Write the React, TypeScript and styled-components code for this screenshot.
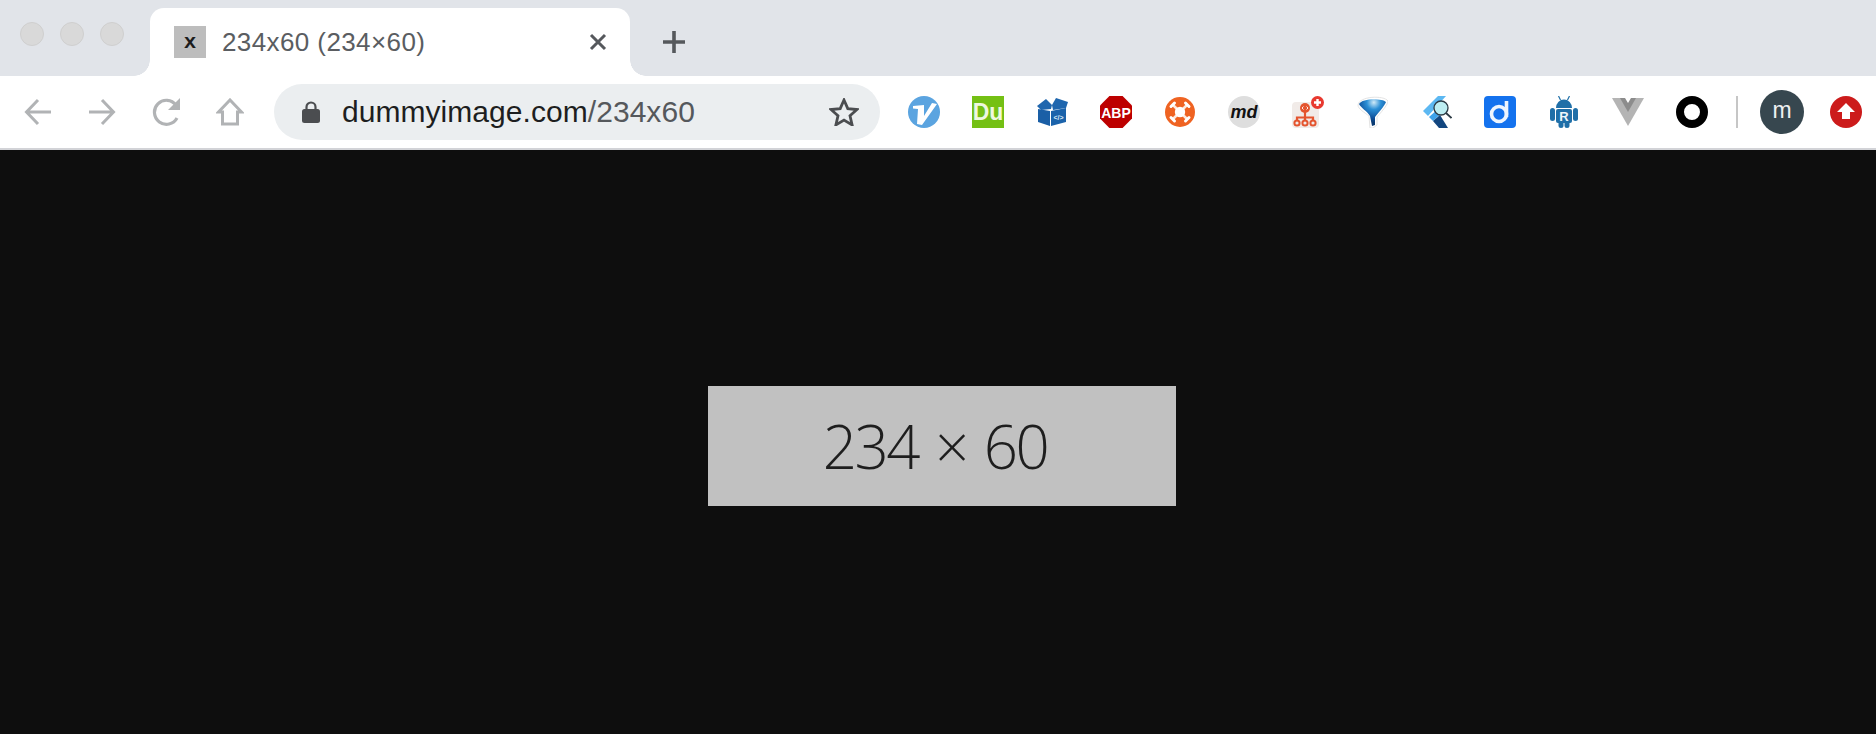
import React from 'react';
import styled, { createGlobalStyle } from 'styled-components';

const GlobalStyle = createGlobalStyle`
    html, body {
        margin: 0;
        padding: 0;
        background: #0e0e0e;
    }
    body {
        font-family: "Liberation Sans", Arial, sans-serif;
    }
`;

const Page = styled.div`
    width: 1876px;
    height: 734px;
    display: flex;
    flex-direction: column;
    overflow: hidden;
`;

const TabStrip = styled.div`
    height: 76px;
    flex: none;
    box-sizing: border-box;
    padding-top: 8px;
    background: #e1e4e9;
    display: flex;
`;

const WindowDots = styled.div`
    width: 150px;
    flex: none;
    box-sizing: border-box;
    padding: 14px 0 0 20px;
    display: flex;
    gap: 16px;
`;

const Dot = styled.span`
    width: 24px;
    height: 24px;
    box-sizing: border-box;
    border-radius: 50%;
    background: #d9d9d9;
    border: 1px solid #cfcfcf;
`;

const Tab = styled.div`
    width: 480px;
    height: 68px;
    flex: none;
    box-sizing: border-box;
    padding: 0 22px 0 24px;
    position: relative;
    background: #fff;
    border-radius: 14px 14px 0 0;
    display: flex;
    align-items: center;

    &::before, &::after {
        content: "";
        position: absolute;
        bottom: 0;
        width: 16px;
        height: 16px;
    }
    &::before {
        left: -16px;
        background: radial-gradient(circle at 0 0, #e1e4e9 15.5px, #fff 16px);
    }
    &::after {
        right: -16px;
        background: radial-gradient(circle at 100% 0, #e1e4e9 15.5px, #fff 16px);
    }
`;

const Favicon = styled.div`
    width: 32px;
    height: 32px;
    flex: none;
    background: #bdbdbd;
    color: #1c1c1c;
    font-family: "Liberation Mono", monospace;
    font-weight: 700;
    font-size: 21px;
    line-height: 33px;
    text-align: center;
`;

const TabTitle = styled.span`
    flex: 1;
    margin-left: 16px;
    font-size: 26px;
    letter-spacing: 0.4px;
    color: #5a5d61;
`;

const TabClose = styled.svg`
    width: 20px;
    height: 20px;
    flex: none;
`;

const NewTab = styled.svg`
    width: 28px;
    height: 28px;
    flex: none;
    margin: 20px 0 0 30px;
`;

const Toolbar = styled.div`
    height: 74px;
    flex: none;
    box-sizing: border-box;
    padding-left: 6px;
    background: #fff;
    border-bottom: 2px solid #d2d3d7;
    display: flex;
    align-items: center;
`;

const NavButton = styled.div`
    width: 64px;
    height: 32px;
    flex: none;
    display: flex;
    align-items: center;
    justify-content: center;
`;

const AddressBar = styled.div`
    width: 606px;
    height: 56px;
    flex: none;
    box-sizing: border-box;
    margin: 0 28px 0 12px;
    padding: 0 21px 0 28px;
    border-radius: 28px;
    background: #ebeef0;
    display: flex;
    align-items: center;
`;

const Url = styled.div`
    flex: 1;
    margin-left: 22px;
    font-size: 30px;
    letter-spacing: 0.05px;
    color: #1d1e20;

    span {
        color: #55585c;
    }
`;

const Extensions = styled.div`
    display: flex;
    gap: 32px;
    align-items: center;
`;

const ExtIcon = styled.svg`
    width: 32px;
    height: 32px;
    flex: none;
    display: block;
`;

const Divider = styled.div`
    width: 2px;
    height: 32px;
    flex: none;
    margin: 0 22px 0 28px;
    background: #c6c6c6;
`;

const Avatar = styled.div`
    width: 44px;
    height: 44px;
    flex: none;
    margin-right: 26px;
    border-radius: 50%;
    background: #37474f;
    color: #eef0f1;
    font-size: 23px;
    line-height: 40px;
    text-align: center;
`;

const Viewport = styled.main`
    flex: 1;
    box-sizing: border-box;
    padding: 8px 0 0 8px;
    background: #0e0e0e;
    display: flex;
    align-items: center;
    justify-content: center;
`;

const DummyImage = styled.div`
    width: 468px;
    height: 120px;
    box-sizing: border-box;
    padding-right: 14px;
    background: #c1c1c1;
    display: flex;
    align-items: center;
    justify-content: center;
`;

const DummyLabel = styled.span`
    color: #1e1e1e;
    font-family: "Open Sans", sans-serif;
    font-weight: 300;
    font-size: 60px;
    letter-spacing: -2.5px;
    word-spacing: 4px;
    white-space: pre;
    filter: blur(0.5px);
`;

const grey = '#b1b3b5';

function Vimium() {
    return (
        <ExtIcon viewBox="0 0 32 32">
            <circle cx="16" cy="16" r="16" fill="#5ba4e0" />
            <path d="M5 10l11-1v11l8-13 5 1-15 21-5-1 1-15-5-.5z" fill="#fff" />
        </ExtIcon>
    );
}

function Duplicate() {
    return (
        <ExtIcon viewBox="0 0 32 32">
            <rect width="32" height="32" fill="#74c014" />
            <text x="16" y="24" textAnchor="middle" fontFamily="Liberation Sans" fontWeight="700" fontSize="23" fill="#eef8e0">Du</text>
        </ExtIcon>
    );
}

function CodeBox() {
    return (
        <ExtIcon viewBox="0 0 32 32">
            <path d="M1 10l9-7 6 6-1 4-10 1z" fill="#1f66ae" />
            <path d="M16 9l4-7 12 4-2 6-13 2z" fill="#1f66ae" />
            <path d="M2 13l12 2v15L2 26z" fill="#1a5fa6" />
            <path d="M15 15l15-3v14l-15 4z" fill="#1b63ab" />
            <text x="22.5" y="24" textAnchor="middle" fontFamily="Liberation Sans" fontWeight="700" fontSize="7" fill="#dcebf7">&lt;/&gt;</text>
        </ExtIcon>
    );
}

function Abp() {
    return (
        <ExtIcon viewBox="0 0 32 32">
            <path d="M9.4 0h13.2L32 9.4v13.2L22.6 32H9.4L0 22.6V9.4z" fill="#bd0000" />
            <text x="16" y="21.5" textAnchor="middle" fontFamily="Liberation Sans" fontWeight="700" fontSize="14" fill="#fff">ABP</text>
        </ExtIcon>
    );
}

function Hub() {
    return (
        <ExtIcon viewBox="0 0 32 32">
            <circle cx="16" cy="16" r="15" fill="#ef6322" />
            <path d="M9 9l14 14M23 9L9 23" stroke="#fde9dd" strokeWidth="2.6" />
            <path d="M7 10.5L10.5 7M21.5 7l3.5 3.5M7 21.5l3.5 3.5M21.5 25l3.5-3.5" stroke="#fff" strokeWidth="3" strokeLinecap="round" />
            <circle cx="16" cy="16" r="5.2" fill="#fff" />
        </ExtIcon>
    );
}

function Md() {
    return (
        <ExtIcon viewBox="0 0 32 32">
            <circle cx="16" cy="16" r="16" fill="#dedede" />
            <text x="16" y="21.5" textAnchor="middle" fontFamily="Liberation Sans" fontWeight="700" fontStyle="italic" fontSize="18" fill="#111">md</text>
        </ExtIcon>
    );
}

function OrgTree() {
    return (
        <ExtIcon viewBox="0 0 32 32">
            <rect y="6" width="27" height="26" rx="4" fill="#f1ebe8" />
            <circle cx="13" cy="12" r="5" fill="#e4552f" />
            <path d="M13 16v8M5 25v-3.5h16V25" fill="none" stroke="#e4552f" strokeWidth="2.2" />
            <circle cx="5" cy="27" r="2.6" fill="none" stroke="#e4552f" strokeWidth="2" />
            <circle cx="13" cy="27" r="2.6" fill="none" stroke="#e4552f" strokeWidth="2" />
            <circle cx="21" cy="27" r="2.6" fill="none" stroke="#e4552f" strokeWidth="2" />
            <path d="M11.5 10.5L10 12l1.5 1.5M14.5 10.5L16 12l-1.5 1.5" fill="none" stroke="#fff" strokeWidth="0.9" />
            <circle cx="25.5" cy="6.5" r="6.5" fill="#e8392f" />
            <path d="M25.5 3v7M22 6.5h7" stroke="#fff" strokeWidth="2.4" />
        </ExtIcon>
    );
}

function Funnel() {
    return (
        <ExtIcon viewBox="0 0 32 32">
            <defs>
                <radialGradient id="funnelFill" cx="0.55" cy="0.12" r="0.75">
                    <stop offset="0" stopColor="#cfeaf8" />
                    <stop offset="0.35" stopColor="#2b8fd6" />
                    <stop offset="0.8" stopColor="#0d4c96" />
                    <stop offset="1" stopColor="#0a3a72" />
                </radialGradient>
            </defs>
            <path d="M2 9C3 0 28 -1 32 5c0 3-4 8-11 16v8l-4 3h-3l-1-12C8 16 2 13 2 9z" fill="#fff" stroke="#dcdcdc" strokeWidth="0.8" />
            <path d="M3 8c3-6 23-6 27-2-1 3-6 9-11 15v8l-3 1-2-10C11 15 5 12 3 8z" fill="url(#funnelFill)" />
        </ExtIcon>
    );
}

function FlutterSearch() {
    return (
        <ExtIcon viewBox="0 0 32 32">
            <path d="M3 15L18 0h8L8 20z" fill="#5cb8f2" />
            <path d="M9 21l9-8h8L13 25z" fill="#3ea2ea" />
            <path d="M13 25l7-6 8 13h-9z" fill="#12467f" />
            <circle cx="21" cy="12" r="7" fill="#bdeef2" stroke="#2c3a44" strokeWidth="1.3" />
            <path d="M26 17l5.5 5" stroke="#2c3a44" strokeWidth="1.8" />
        </ExtIcon>
    );
}

function Daily() {
    return (
        <ExtIcon viewBox="0 0 32 32">
            <rect width="32" height="32" rx="4" fill="#1472ee" />
            <circle cx="15" cy="18" r="7.5" fill="none" stroke="#eef5fe" strokeWidth="3.6" />
            <path d="M22.5 5v16" stroke="#eef5fe" strokeWidth="3.6" />
        </ExtIcon>
    );
}

function Android() {
    return (
        <ExtIcon viewBox="0 0 32 32">
            <g fill="#1f6fa8">
                <path d="M8 12a8 8.5 0 0 1 16 0z" />
                <rect x="8" y="13" width="16" height="14" rx="2" />
                <rect x="2" y="12" width="5" height="13" rx="2.5" />
                <rect x="25" y="12" width="5" height="13" rx="2.5" />
                <rect x="10.5" y="25" width="5" height="7" rx="2.5" />
                <rect x="16.5" y="25" width="5" height="7" rx="2.5" />
            </g>
            <path d="M10.5 0l2 4M21.5 0l-2 4" stroke="#1f6fa8" strokeWidth="1.2" />
            <text x="16" y="24.5" textAnchor="middle" fontFamily="Liberation Sans" fontWeight="700" fontSize="13" fill="#eef6fb">R</text>
        </ExtIcon>
    );
}

function VueGrey() {
    return (
        <ExtIcon viewBox="0 0 32 32">
            <path d="M0 2h32L16 30z" fill="#b4b4b4" />
            <path d="M8 2h16l-8 14z" fill="#8c8c8c" />
            <path d="M13 2h6l-3 5z" fill="#fff" />
        </ExtIcon>
    );
}

function Ring() {
    return (
        <ExtIcon viewBox="0 0 32 32">
            <circle cx="16" cy="16" r="12" fill="#fff" stroke="#000" strokeWidth="8" />
        </ExtIcon>
    );
}

function UploadBadge() {
    return (
        <ExtIcon viewBox="0 0 32 32">
            <circle cx="16" cy="16" r="16" fill="#cc1b1b" />
            <path d="M16 7l9 9h-5v7h-8v-7H7z" fill="#fff" />
        </ExtIcon>
    );
}

function App() {
    return (
        <Page>
            <GlobalStyle />
            <TabStrip>
                <WindowDots>
                    <Dot />
                    <Dot />
                    <Dot />
                </WindowDots>
                <Tab>
                    <Favicon>x</Favicon>
                    <TabTitle>234x60 (234×60)</TabTitle>
                    <TabClose viewBox="0 0 20 20">
                        <path d="M3 3l14 14M17 3L3 17" stroke="#55585c" strokeWidth="3" />
                    </TabClose>
                </Tab>
                <NewTab viewBox="0 0 28 28">
                    <path d="M14 3v22M3 14h22" stroke="#55585c" strokeWidth="3.6" />
                </NewTab>
            </TabStrip>
            <Toolbar>
                <NavButton>
                    <svg width="28" height="28" viewBox="0 0 28 28" fill="none" stroke={grey} strokeWidth="3">
                        <path d="M27 14H3M14 2L2.5 14 14 26" />
                    </svg>
                </NavButton>
                <NavButton>
                    <svg width="28" height="28" viewBox="0 0 28 28" fill="none" stroke={grey} strokeWidth="3">
                        <path d="M1 14h24M14 2l11.5 12L14 26" />
                    </svg>
                </NavButton>
                <NavButton>
                    <svg width="30" height="28" viewBox="-2 0 30 28" fill="none">
                        <path d="M24 20a12 12 0 1 1-1-13" stroke={grey} strokeWidth="3.2" />
                        <path d="M27 0v12H15z" fill={grey} />
                    </svg>
                </NavButton>
                <NavButton>
                    <svg width="28" height="28" viewBox="0 0 28 28" fill="none" stroke={grey} strokeWidth="3">
                        <path d="M2.5 14L14 2l11.5 12h-4v12h-15V14z" />
                    </svg>
                </NavButton>
                <AddressBar>
                    <svg width="18" height="22" viewBox="0 0 18 22" style={{ flex: 'none' }}>
                        <path d="M4.5 9V6a4.5 4.5 0 0 1 9 0v3" fill="none" stroke="#4b4d50" strokeWidth="2.2" />
                        <rect y="8" width="18" height="14" rx="2.5" fill="#4b4d50" />
                    </svg>
                    <Url>dummyimage.com<span>/234x60</span></Url>
                    <svg width="30" height="28" viewBox="1 1 30 28" style={{ flex: 'none' }}>
                        <path d="M16 3l3.8 8.6 9.2.9-7 6.2 2.1 9.2-8.1-4.8-8.1 4.8 2.1-9.2-7-6.2 9.2-.9z" fill="none" stroke="#4b4d50" strokeWidth="2.8" strokeLinejoin="miter" />
                    </svg>
                </AddressBar>
                <Extensions>
                    <Vimium />
                    <Duplicate />
                    <CodeBox />
                    <Abp />
                    <Hub />
                    <Md />
                    <OrgTree />
                    <Funnel />
                    <FlutterSearch />
                    <Daily />
                    <Android />
                    <VueGrey />
                    <Ring />
                </Extensions>
                <Divider />
                <Avatar>m</Avatar>
                <UploadBadge />
            </Toolbar>
            <Viewport>
                <DummyImage>
                    <DummyLabel>234 × 60</DummyLabel>
                </DummyImage>
            </Viewport>
        </Page>
    );
}

export default App;
